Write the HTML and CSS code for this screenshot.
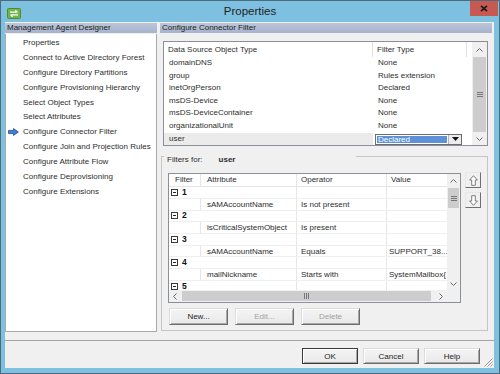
FILE: index.html
```html
<!DOCTYPE html>
<html lang="en">
<head>
    <meta charset="UTF-8">
    <title>Properties</title>
    <link rel="stylesheet" href="styles.css">
</head>
<body>
    <div class="window">
        <div class="titlebar">
            <svg class="app-icon" width="14" height="11" viewBox="0 0 14 11">
                <rect x="0.5" y="0.5" width="13" height="10" rx="1" fill="#72b34c" stroke="#4d8c31"/>
                <path d="M3 4.2h7.5M8.3 2.2l2.2 2M11 6.8H3.5M5.7 8.8l-2.2-2" stroke="#fff" stroke-width="1.2" fill="none"/>
            </svg>
            <div class="title">Properties</div>
            <div class="close">
                <svg width="8" height="7" viewBox="0 0 8 7"><path d="M1 0.8l6 5.4M7 0.8l-6 5.4" stroke="#1a1a1a" stroke-width="1.7"/></svg>
            </div>
        </div>

        <div class="client">
            <div class="split">
                <div class="nav-panel">
                    <div class="panel-header">Management Agent Designer</div>
                    <ul class="nav-list">
                        <li><span class="nav-icon"></span>Properties</li>
                        <li><span class="nav-icon"></span>Connect to Active Directory Forest</li>
                        <li><span class="nav-icon"></span>Configure Directory Partitions</li>
                        <li><span class="nav-icon"></span>Configure Provisioning Hierarchy</li>
                        <li><span class="nav-icon"></span>Select Object Types</li>
                        <li><span class="nav-icon"></span>Select Attributes</li>
                        <li class="current">
                            <span class="nav-icon">
                                <svg width="11" height="8" viewBox="0 0 11 8"><path d="M0.5 2.4h5V0.6L10.4 4 5.5 7.4V5.6h-5z" fill="#3f7fd4" stroke="#1d4f98" stroke-width="0.8"/></svg>
                            </span>Configure Connector Filter
                        </li>
                        <li><span class="nav-icon"></span>Configure Join and Projection Rules</li>
                        <li><span class="nav-icon"></span>Configure Attribute Flow</li>
                        <li><span class="nav-icon"></span>Configure Deprovisioning</li>
                        <li><span class="nav-icon"></span>Configure Extensions</li>
                    </ul>
                </div>

                <div class="main-panel">
                    <div class="panel-header">Configure Connector Filter</div>
                    <div class="main-body">
                        <!-- object types and their filter type -->
                        <div class="obj-table">
                            <div class="obj-grid">
                                <div class="obj-row obj-head">
                                    <div class="col-type">Data Source Object Type</div>
                                    <div class="col-filter">Filter Type</div>
                                    <div class="col-rest"></div>
                                </div>
                                <div class="obj-row"><div class="col-type">domainDNS</div><div class="col-filter">None</div></div>
                                <div class="obj-row"><div class="col-type">group</div><div class="col-filter">Rules extension</div></div>
                                <div class="obj-row"><div class="col-type">inetOrgPerson</div><div class="col-filter">Declared</div></div>
                                <div class="obj-row"><div class="col-type">msDS-Device</div><div class="col-filter">None</div></div>
                                <div class="obj-row"><div class="col-type">msDS-DeviceContainer</div><div class="col-filter">None</div></div>
                                <div class="obj-row"><div class="col-type">organizationalUnit</div><div class="col-filter">None</div></div>
                                <div class="obj-row selected">
                                    <div class="col-type">user</div>
                                    <div class="col-combo">
                                        <div class="combo">
                                            <span class="combo-value">Declared</span>
                                            <span class="combo-drop">
                                                <svg width="7" height="4" viewBox="0 0 7 4"><path d="M0 0h7L3.5 4z" fill="#111"/></svg>
                                            </span>
                                        </div>
                                    </div>
                                </div>
                            </div>
                            <div class="vscroll">
                                <div class="sb-btn top-btn">
                                    <svg width="7" height="4" viewBox="0 0 7 4"><path d="M0.5 3.5L3.5 0.5 6.5 3.5" stroke="#6a6a6a" fill="none"/></svg>
                                </div>
                                <div class="sb-thumb tall-thumb">
                                    <svg width="6" height="5" viewBox="0 0 6 5"><path d="M0 0.5h6M0 2.5h6M0 4.5h6" stroke="#777"/></svg>
                                </div>
                                <div class="sb-track"></div>
                                <div class="sb-btn bottom-btn">
                                    <svg width="7" height="4" viewBox="0 0 7 4"><path d="M0.5 0.5L3.5 3.5 6.5 0.5" stroke="#6a6a6a" fill="none"/></svg>
                                </div>
                            </div>
                        </div>

                        <div class="groupbox">
                            <div class="group-title">
                                <span>Filters for:</span>
                                <span class="group-object">user</span>
                            </div>

                            <div class="filter-area">
                                <div class="filter-table">
                                    <div class="filter-data">
                                        <div class="f-row f-head">
                                            <div class="f-col f-filter">Filter</div>
                                            <div class="f-col f-attr">Attribute</div>
                                            <div class="f-col f-op">Operator</div>
                                            <div class="f-col f-val">Value</div>
                                        </div>
                                        <div class="f-row">
                                            <div class="f-col f-filter group-cell"><span class="tree-box"></span><b>1</b></div>
                                            <div class="f-col f-attr"></div><div class="f-col f-op"></div><div class="f-col f-val"></div>
                                        </div>
                                        <div class="f-row">
                                            <div class="f-col f-filter"></div>
                                            <div class="f-col f-attr">sAMAccountName</div><div class="f-col f-op">Is not present</div><div class="f-col f-val"></div>
                                        </div>
                                        <div class="f-row">
                                            <div class="f-col f-filter group-cell"><span class="tree-box"></span><b>2</b></div>
                                            <div class="f-col f-attr"></div><div class="f-col f-op"></div><div class="f-col f-val"></div>
                                        </div>
                                        <div class="f-row">
                                            <div class="f-col f-filter"></div>
                                            <div class="f-col f-attr">isCriticalSystemObject</div><div class="f-col f-op">Is present</div><div class="f-col f-val"></div>
                                        </div>
                                        <div class="f-row">
                                            <div class="f-col f-filter group-cell"><span class="tree-box"></span><b>3</b></div>
                                            <div class="f-col f-attr"></div><div class="f-col f-op"></div><div class="f-col f-val"></div>
                                        </div>
                                        <div class="f-row">
                                            <div class="f-col f-filter"></div>
                                            <div class="f-col f-attr">sAMAccountName</div><div class="f-col f-op">Equals</div><div class="f-col f-val">SUPPORT_38...</div>
                                        </div>
                                        <div class="f-row">
                                            <div class="f-col f-filter group-cell"><span class="tree-box"></span><b>4</b></div>
                                            <div class="f-col f-attr"></div><div class="f-col f-op"></div><div class="f-col f-val"></div>
                                        </div>
                                        <div class="f-row">
                                            <div class="f-col f-filter"></div>
                                            <div class="f-col f-attr">mailNickname</div><div class="f-col f-op">Starts with</div><div class="f-col f-val">SystemMailbox{</div>
                                        </div>
                                        <div class="f-row">
                                            <div class="f-col f-filter group-cell"><span class="tree-box"></span><b>5</b></div>
                                            <div class="f-col f-attr"></div><div class="f-col f-op"></div><div class="f-col f-val"></div>
                                        </div>
                                    </div>
                                    <div class="vscroll small">
                                        <div class="sb-btn top-btn">
                                            <svg width="7" height="4" viewBox="0 0 7 4"><path d="M0.5 3.5L3.5 0.5 6.5 3.5" stroke="#6a6a6a" fill="none"/></svg>
                                        </div>
                                        <div class="sb-thumb short-thumb">
                                            <svg width="6" height="5" viewBox="0 0 6 5"><path d="M0 0.5h6M0 2.5h6M0 4.5h6" stroke="#777"/></svg>
                                        </div>
                                        <div class="sb-track"></div>
                                        <div class="sb-btn bottom-btn">
                                            <svg width="7" height="4" viewBox="0 0 7 4"><path d="M0.5 0.5L3.5 3.5 6.5 0.5" stroke="#6a6a6a" fill="none"/></svg>
                                        </div>
                                    </div>
                                    <div class="hscroll">
                                        <div class="sb-btn side-btn">
                                            <svg width="4" height="7" viewBox="0 0 4 7"><path d="M3.5 0.5L0.5 3.5 3.5 6.5" stroke="#6a6a6a" fill="none"/></svg>
                                        </div>
                                        <div class="sb-thumb wide-thumb">
                                            <svg width="5" height="6" viewBox="0 0 5 6"><path d="M0.5 0v6M2.5 0v6M4.5 0v6" stroke="#777"/></svg>
                                        </div>
                                        <div class="sb-track"></div>
                                        <div class="sb-btn side-btn">
                                            <svg width="4" height="7" viewBox="0 0 4 7"><path d="M0.5 0.5L3.5 3.5 0.5 6.5" stroke="#6a6a6a" fill="none"/></svg>
                                        </div>
                                    </div>
                                    <div class="sb-corner"></div>
                                </div>

                                <div class="order-buttons">
                                    <div class="order-btn">
                                        <svg width="9" height="11" viewBox="0 0 9 11"><path d="M4.5 0.7L8.4 5H6.3v5.3H2.7V5H0.6z" fill="#fff" stroke="#7d7d7d"/></svg>
                                    </div>
                                    <div class="order-btn">
                                        <svg width="9" height="11" viewBox="0 0 9 11"><path d="M4.5 10.3L8.4 6H6.3V0.7H2.7V6H0.6z" fill="#fff" stroke="#7d7d7d"/></svg>
                                    </div>
                                </div>
                            </div>

                            <div class="filter-actions">
                                <button class="btn">New...</button>
                                <button class="btn" disabled>Edit...</button>
                                <button class="btn" disabled>Delete</button>
                            </div>
                        </div>
                    </div>
                </div>
            </div>

            <div class="dialog-buttons">
                <button class="btn dialog-btn default">OK</button>
                <button class="btn dialog-btn">Cancel</button>
                <button class="btn dialog-btn">Help</button>
                <svg class="size-grip" width="9" height="9" viewBox="0 0 9 9"><path d="M8.5 0.5l-8 8M8.5 3.5l-5 5M8.5 6.5l-2 2" stroke="#9b9b9b"/></svg>
            </div>
        </div>
    </div>
</body>
</html>
```

FILE: styles.css
```css
* {
    box-sizing: border-box;
}
body {
    margin: 0;
    font-family: "Liberation Sans", Arial, sans-serif;
    font-size: 8px;
    color: #2e2e2e;
    background-color: #7ec0df;
}
.window {
    width: 500px;
    height: 374px;
    border: 1px solid #4c6b7d;
    background-color: #7ec0df;
    display: flex;
    flex-direction: column;
}

/* title bar */
.titlebar {
    height: 21px;
    display: grid;
    grid-template-columns: 1fr auto 1fr;
    align-items: start;
}
.app-icon {
    margin: 7px 0 0 6px;
}
.title {
    font-size: 11.5px;
    line-height: 21px;
    color: #1e1e1e;
}
.close {
    justify-self: end;
    width: 28px;
    height: 15px;
    margin-right: 1px;
    background-color: #c65a52;
    display: flex;
    align-items: center;
    justify-content: center;
}

.client {
    margin: 0 5px 5px 4px;
    flex: 1;
    background-color: #f0f0f0;
    display: flex;
    flex-direction: column;
}
.split {
    height: 319px;
    padding: 1px 2px 0 0;
    display: flex;
    gap: 3px;
    border-bottom: 1px solid #a3a3a3;
}
.panel-header {
    height: 10px;
    line-height: 10px;
    padding-left: 2px;
    color: #1c1c1c;
    background: linear-gradient(#bcc6da, #a6b3cc);
    white-space: nowrap;
}

/* left navigation */
.nav-panel {
    width: 152px;
}
.nav-list {
    list-style: none;
    margin: 1px 0 0;
    padding: 1px 0 0;
    height: 298px;
    background-color: #fff;
    border: 1px solid #a9a9a9;
    border-top: none;
}
.nav-list li {
    display: flex;
    align-items: center;
    height: 14.9px;
    white-space: nowrap;
}
.nav-icon {
    width: 17px;
    padding-left: 2px;
    display: flex;
    align-items: center;
}

/* right panel */
.main-panel {
    width: 332px;
}
.main-body {
    padding: 8px 4px 0 1px;
}
.obj-table {
    margin-left: 2px;
    display: flex;
    background-color: #fff;
    border: 1px solid #8a8f98;
}
.obj-grid {
    flex: 1;
}
.obj-row {
    display: flex;
    height: 12.6px;
    line-height: 12.6px;
    white-space: nowrap;
}
.obj-head {
    height: 15px;
    line-height: 15px;
}
.col-type {
    width: 209px;
    padding-left: 5px;
}
.col-filter {
    width: 94px;
    padding-left: 5px;
}
.obj-head .col-type,
.obj-head .col-filter {
    padding-left: 4px;
    border-right: 1px solid #e2e2e2;
}
.col-rest {
    flex: 1;
}
.selected .col-type {
    background-color: #ebebeb;
}
.col-combo {
    padding: 1px 0 0 2px;
}
.combo {
    width: 87px;
    height: 11.5px;
    display: flex;
    border: 1px solid #6d6d6d;
    background-color: #fff;
}
.combo-value {
    flex: 1;
    margin: 1px;
    padding-left: 1px;
    line-height: 8px;
    color: #fff;
    background-color: #5d92d8;
}
.combo-drop {
    width: 13px;
    display: flex;
    align-items: center;
    justify-content: center;
    background-color: #ececec;
    border-left: 1px solid #b5b5b5;
}

/* scrollbars */
.vscroll {
    width: 15px;
    display: flex;
    flex-direction: column;
    background-color: #f0f0f0;
}
.vscroll.small {
    width: 13px;
}
.sb-btn {
    display: flex;
    align-items: center;
    justify-content: center;
    flex-shrink: 0;
}
.top-btn {
    height: 15px;
}
.bottom-btn {
    height: 13px;
}
.small .top-btn {
    height: 14px;
}
.small .bottom-btn {
    height: 12px;
}
.sb-thumb {
    display: flex;
    align-items: center;
    justify-content: center;
    background-color: #cdcdcd;
    margin: 0 1px;
}
.tall-thumb {
    height: 75px;
}
.short-thumb {
    height: 20px;
}
.sb-track {
    flex: 1;
}
.hscroll {
    display: flex;
    background-color: #f0f0f0;
}
.side-btn {
    width: 12px;
}
.wide-thumb {
    width: 249px;
    margin: 1px 0 1px 1px;
}
.sb-corner {
    background-color: #f0f0f0;
}

/* filters group */
.groupbox {
    margin-top: 10px;
    height: 175px;
    border: 1px solid #c5c5c5;
    padding: 0 0 5px 6px;
}
.group-title {
    display: flex;
    width: 192px;
    height: 10px;
    line-height: 10px;
    margin: -2px 0 0 -4px;
    padding-left: 3px;
    background-color: #f0f0f0;
    color: #2e2e2e;
}
.group-object {
    margin-left: 16px;
    font-weight: bold;
}
.filter-area {
    display: flex;
    gap: 4px;
    margin-top: 8px;
}
.filter-table {
    width: 293px;
    display: grid;
    grid-template-columns: 278px 13px;
    grid-template-rows: 116px 12px;
    border: 1px solid #8a8f98;
    background-color: #fff;
}
.filter-data {
    overflow: hidden;
}
.f-row {
    display: flex;
    height: 11.7px;
    line-height: 11px;
    border-bottom: 1px solid #efefef;
    white-space: nowrap;
}
.f-head {
    height: 13px;
    line-height: 12px;
    border-bottom-color: #e4e4e4;
}
.f-col {
    flex-shrink: 0;
    padding-left: 4px;
    border-right: 1px solid #e6e6e6;
    overflow: hidden;
}
.f-filter {
    width: 32px;
}
.f-head .f-filter {
    padding-left: 6px;
}
.f-attr {
    width: 96px;
    padding-left: 6px;
}
.f-op {
    width: 90px;
}
.f-val {
    width: 90px;
    padding-left: 2px;
}
.f-head .f-val {
    padding-left: 4px;
}
.group-cell {
    display: flex;
    align-items: center;
    padding-left: 2px;
    border-right-color: transparent;
}
.group-cell b {
    margin-left: 4px;
    font-size: 8.5px;
    color: #111;
}
.tree-box {
    width: 7px;
    height: 7px;
    border: 1px solid #3a3a3a;
    display: flex;
    align-items: center;
    justify-content: center;
}
.tree-box::after {
    content: "";
    width: 3px;
    height: 1px;
    background-color: #222;
}
.order-buttons {
    display: flex;
    flex-direction: column;
    gap: 4px;
    margin-top: -1px;
}
.order-btn {
    width: 16px;
    height: 16px;
    display: flex;
    align-items: center;
    justify-content: center;
    background-color: #f0f0f0;
    border: 1px solid;
    border-color: #e6e6e6 #6f6f6f #6f6f6f #e6e6e6;
}

/* buttons */
.btn {
    font-family: inherit;
    font-size: 8px;
    color: #1e1e1e;
    padding: 0;
    background: linear-gradient(#f4f4f4, #e9e9e9);
    border: 1px solid;
    border-color: #dcdcdc #6c6c6c #6c6c6c #dcdcdc;
    box-shadow: inset 1px 1px #fff, inset -1px -1px #a8a8a8;
}
.btn:disabled {
    color: #a3a3a3;
}
.filter-actions {
    display: flex;
    gap: 7px;
    margin: 5px 0 0 1px;
}
.filter-actions .btn {
    width: 59px;
    height: 17px;
}
.dialog-buttons {
    position: relative;
    flex: 1;
    display: flex;
    justify-content: flex-end;
    align-items: flex-start;
    gap: 5px;
    padding: 7px 14px 0 0;
}
.dialog-btn {
    width: 56px;
    height: 16px;
}
.dialog-btn.default {
    border-color: #3a3a3a;
}
.size-grip {
    position: absolute;
    right: 1px;
    bottom: 1px;
}
```
